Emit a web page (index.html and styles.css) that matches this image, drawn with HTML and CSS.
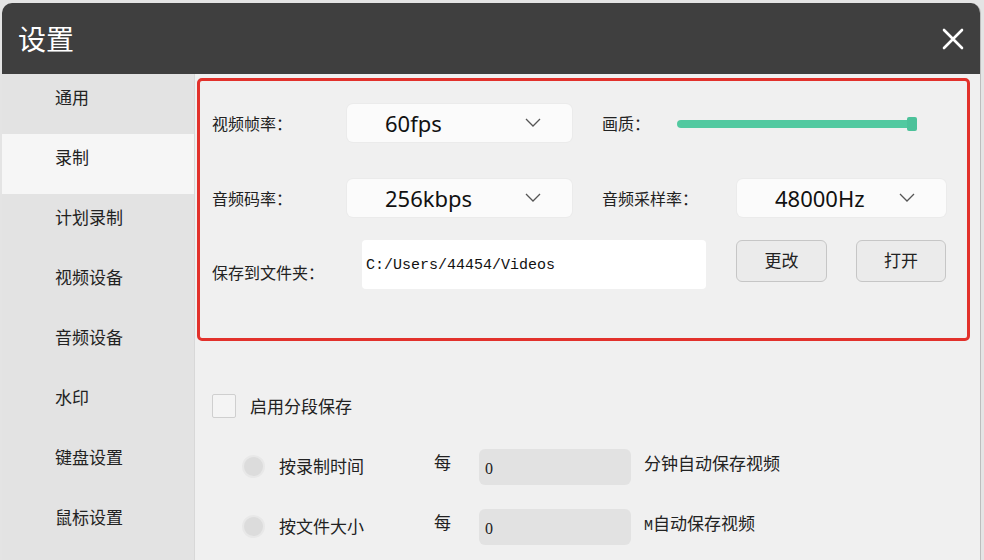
FILE: index.html
```html
<!DOCTYPE html>
<html lang="zh-CN">
<head>
  <meta charset="UTF-8">
  <title>设置</title>
  <link rel="stylesheet" href="styles.css">
</head>
<body>
  <div class="window">
    <div class="titlebar">
      <span class="title">设置</span>
      <svg class="close" width="22" height="22" viewBox="0 0 22 22">
        <path d="M2 2 L20 20 M20 2 L2 20" stroke="#fff" stroke-width="2.6" stroke-linecap="round"/>
      </svg>
    </div>

    <div class="body">
      <ul class="sidebar">
        <li>通用</li>
        <li class="active">录制</li>
        <li>计划录制</li>
        <li>视频设备</li>
        <li>音频设备</li>
        <li>水印</li>
        <li>键盘设置</li>
        <li>鼠标设置</li>
      </ul>

      <div class="main">
        <div class="highlight">
          <div class="row">
            <span class="label w135">视频帧率：</span>
            <div class="select w225"><span>60fps</span><svg class="chev" width="16" height="9" viewBox="0 0 16 9"><path d="M1 1 L8 8 L15 1" fill="none" stroke="#555" stroke-width="1.3"/></svg></div>
            <span class="label w75 ml30">画质：</span>
            <div class="slider"><div class="thumb"></div></div>
          </div>

          <div class="row r2">
            <span class="label w135">音频码率：</span>
            <div class="select w225"><span>256kbps</span><svg class="chev" width="16" height="9" viewBox="0 0 16 9"><path d="M1 1 L8 8 L15 1" fill="none" stroke="#555" stroke-width="1.3"/></svg></div>
            <span class="label w135 ml30">音频采样率：</span>
            <div class="select w209"><span>48000Hz</span><svg class="chev" width="16" height="9" viewBox="0 0 16 9"><path d="M1 1 L8 8 L15 1" fill="none" stroke="#555" stroke-width="1.3"/></svg></div>
          </div>

          <div class="row r3">
            <span class="label w150 folder-label">保存到文件夹：</span>
            <div class="path">C:/Users/44454/Videos</div>
            <button class="btn">更改</button>
            <button class="btn">打开</button>
          </div>
        </div>

        <div class="segment">
          <label class="check"><span class="box"></span>启用分段保存</label>

          <div class="seg-row">
            <span class="radio"></span>
            <span class="seg-label">按录制时间</span>
            <span class="every">每</span>
            <div class="num">0</div>
            <span class="suffix">分钟自动保存视频</span>
          </div>
          <div class="seg-row">
            <span class="radio"></span>
            <span class="seg-label">按文件大小</span>
            <span class="every">每</span>
            <div class="num">0</div>
            <span class="suffix"><span class="m">M</span>自动保存视频</span>
          </div>
        </div>
      </div>
    </div>
  </div>
</body>
</html>
```

FILE: styles.css
```css
html, body {
  margin: 0;
  height: 100%;
  overflow: hidden;
}
body {
  background: #e4e4e4;
  font-family: "Noto Sans CJK SC", "Noto Sans", sans-serif;
  color: #222;
}
.window {
  margin: 3px 3px 0 2px;
  height: 557px;
  display: flex;
  flex-direction: column;
  border-radius: 10px 10px 0 0;
  overflow: hidden;
  border-right: 1px solid #bdbdbd;
  background: #f0f0f0;
}
.titlebar {
  height: 71px;
  flex: none;
  background: #3f3f3f;
  display: flex;
  align-items: center;
  justify-content: space-between;
  padding: 0 16px 0 16px;
}
.title {
  color: #fff;
  font-size: 28px;
  margin-top: -1px;
}
.body {
  flex: 1;
  display: flex;
}
.sidebar {
  list-style: none;
  margin: 0;
  padding: 0;
  width: 192px;
  flex: none;
  background: #e3e3e3;
  border-right: 1px solid #d8d8d8;
}
.sidebar li {
  height: 60px;
  line-height: 46px;
  padding-left: 53px;
  font-size: 17px;
  color: #222;
}
.sidebar li.active {
  background: #f6f6f6;
}
.main {
  flex: 1;
}
.highlight {
  margin: 4px 0 0 2px;
  border: 3px solid #e2312b;
  border-radius: 5px;
  padding: 23px 0 0 12px;
  width: 755px;
  height: 234px;
}
.row {
  display: flex;
  align-items: center;
  height: 38px;
}
.row.r2 {
  margin-top: 37px;
}
.row.r3 {
  margin-top: 23px;
  align-items: flex-start;
  height: 49px;
}
.label {
  font-size: 16px;
  flex: none;
}
.w135 { width: 135px; }
.w150 { width: 150px; }
.w75 { width: 75px; }
.w225 { width: 225px; }
.w209 { width: 209px; }
.ml30 { margin-left: 30px; }
.select {
  height: 38px;
  background: #fbfbfb;
  border-radius: 6px;
  box-shadow: 0 0 0 1px #ebebeb;
  display: flex;
  align-items: center;
  justify-content: space-between;
  padding: 0 31px 0 38px;
  box-sizing: border-box;
  flex: none;
  font-family: "Noto Sans", "Open Sans", sans-serif;
  font-size: 22px;
  color: #111;
}
.chev {
  margin-top: -2px;
}
.slider {
  width: 240px;
  height: 8px;
  margin-top: 2px;
  background: #52c9a0;
  border-radius: 4px;
  position: relative;
}
.thumb {
  position: absolute;
  right: 0;
  top: -3px;
  width: 10px;
  height: 14px;
  background: #4cc29a;
  border-radius: 2px;
}
.folder-label {
  padding-top: 20px;
}
.path {
  width: 344px;
  height: 49px;
  background: #fff;
  border-radius: 4px;
  box-sizing: border-box;
  padding: 17px 4px 0;
  font-family: "Liberation Mono", monospace;
  font-size: 15px;
  color: #111;
  flex: none;
}
.btn {
  width: 91px;
  height: 42px;
  margin-left: 30px;
  background: #ebebeb;
  border: 1px solid #c6c6c6;
  border-radius: 6px;
  font-family: "Noto Sans CJK SC", sans-serif;
  font-size: 17px;
  color: #222;
  padding: 0 0 4px;
}
.btn + .btn {
  margin-left: 29px;
  width: 90px;
}
.segment {
  padding: 52px 0 0 17px;
}
.check {
  display: flex;
  align-items: center;
  font-size: 17px;
}
.box {
  width: 22px;
  height: 22px;
  border: 1px solid #cfcfcf;
  border-radius: 2px;
  background: #f4f4f4;
  margin-right: 14px;
}
.seg-row {
  display: flex;
  align-items: center;
  height: 36px;
  margin-left: 30px;
  font-size: 17px;
}
.check + .seg-row {
  margin-top: 31px;
}
.seg-row + .seg-row {
  margin-top: 24px;
}
.radio {
  width: 19px;
  height: 19px;
  border-radius: 50%;
  background: #dcdcdc;
  border: 2px solid #e8e8e8;
  margin-right: 14px;
  margin-top: -2px;
}
.seg-label {
  width: 155px;
  margin-top: -4px;
}
.every {
  width: 45px;
  margin-top: -12px;
}
.num {
  width: 152px;
  height: 36px;
  background: #e2e2e2;
  border-radius: 6px;
  box-sizing: border-box;
  padding: 11px 6px 0;
  font-family: "Liberation Serif", serif;
  font-size: 16px;
}
.suffix {
  margin-left: 13px;
  margin-top: -10px;
}
.m {
  font-family: "Liberation Mono", monospace;
  font-size: 15px;
}
```
